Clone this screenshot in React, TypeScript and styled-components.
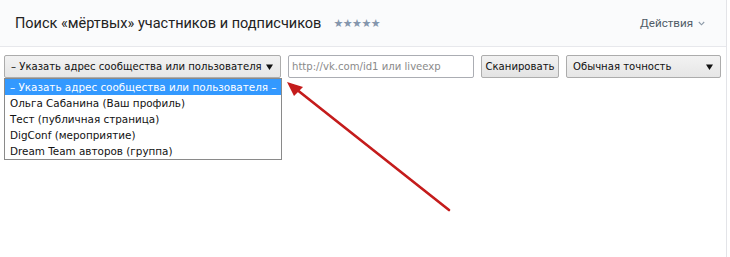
import React from "react";
import styled, { createGlobalStyle } from "styled-components";

const Global = createGlobalStyle`
  html, body { margin: 0; padding: 0; background: #fff; }
  body { width: 730px; height: 257px; overflow: hidden; position: relative; }
`;

const Page = styled.div`
  position: relative;
  width: 730px;
  height: 257px;
`;

const Card = styled.div`
  width: 726px;
  height: 257px;
  border-right: 1px solid #e3e4e8;
  background: #fff;
`;

const Header = styled.div`
  height: 47px;
  background: #fafbfc;
  border-bottom: 1px solid #e7e8ec;
  display: flex;
  align-items: center;
  padding: 0 21px 0 15px;
  box-sizing: border-box;
  font-family: Roboto, "Open Sans", sans-serif;
`;

const Title = styled.div`
  font-size: 14.5px;
  color: #222;
`;

const Stars = styled.div`
  margin-left: 12px;
  color: #8496ad;
  font-size: 11px;
  letter-spacing: -0.5px;
  font-family: "DejaVu Sans", sans-serif;
`;

const Actions = styled.div`
  margin-left: auto;
  font-size: 11.6px;
  color: #4f5b67;
  display: flex;
  align-items: center;
  gap: 5px;
`;

const Toolbar = styled.div`
  display: flex;
  align-items: flex-start;
  gap: 7px;
  padding: 8px 0 0 4px;
  font-family: "DejaVu Sans", Tahoma, sans-serif;
  font-size: 10.1px;
  & > * { flex-shrink: 0; }
`;

const SelectWrap = styled.div`
  position: relative;
`;

const SelectBox = styled.div<{ $w: number }>`
  width: ${(p) => p.$w}px;
  height: 23px;
  box-sizing: border-box;
  border: 1px solid #acacac;
  border-radius: 2px;
  background: linear-gradient(#f2f2f2, #e6e6e6);
  display: flex;
  align-items: center;
  padding: 0 7px 0 6px;
  color: #111;
  white-space: nowrap;
`;

const Caret = styled.svg`
  margin-left: auto;
  flex-shrink: 0;
`;

const ListBox = styled.div`
  position: absolute;
  top: 23px;
  left: 0;
  width: 278px;
  box-sizing: border-box;
  border: 1px solid #8a8a8a;
  background: #fff;
  font-size: 10.4px;
`;

const Option = styled.div<{ $active?: boolean }>`
  height: 16px;
  line-height: 16px;
  padding: 0 5px;
  white-space: nowrap;
  color: ${(p) => (p.$active ? "#fff" : "#111")};
  background: ${(p) => (p.$active ? "#3399ff" : "transparent")};
`;

const Input = styled.input`
  width: 186px;
  height: 23px;
  box-sizing: border-box;
  border: 1px solid #abadb3;
  border-radius: 2px;
  padding: 0 3px;
  font: inherit;
  color: #111;
  &::placeholder { color: #8a8a8a; }
`;

const Button = styled.button`
  width: 78px;
  height: 23px;
  box-sizing: border-box;
  border: 1px solid #adadad;
  border-radius: 2px;
  background: linear-gradient(#f2f2f2, #e3e3e3);
  font: inherit;
  color: #111;
  padding: 0;
`;

const ArrowSvg = styled.svg`
  position: absolute;
  left: 0;
  top: 0;
  pointer-events: none;
`;

const DownTri = () => (
  <Caret width="7" height="6" viewBox="0 0 7 6">
    <polygon points="0,0.5 7,0.5 3.5,6" fill="#111" />
  </Caret>
);

export default function App() {
  return (
    <Page>
      <Global />
      <Card>
        <Header>
          <Title>Поиск «мёртвых» участников и подписчиков</Title>
          <Stars>★★★★★</Stars>
          <Actions>
            Действия
            <svg width="7" height="5" viewBox="0 0 7 5">
              <path d="M0.8 1 L3.5 3.8 L6.2 1" fill="none" stroke="#8c9aa8" strokeWidth="1.1" />
            </svg>
          </Actions>
        </Header>
        <Toolbar>
          <SelectWrap>
            <SelectBox $w={277}>
              – Указать адрес сообщества или пользователя
              <DownTri />
            </SelectBox>
            <ListBox>
              <Option $active>– Указать адрес сообщества или пользователя –</Option>
              <Option>Ольга Сабанина (Ваш профиль)</Option>
              <Option>Тест (публичная страница)</Option>
              <Option>DigConf (мероприятие)</Option>
              <Option>Dream Team авторов (группа)</Option>
            </ListBox>
          </SelectWrap>
          <Input placeholder="http://vk.com/id1 или liveexp" />
          <Button>Сканировать</Button>
          <SelectBox $w={155}>
            Обычная точность
            <DownTri />
          </SelectBox>
        </Toolbar>
      </Card>
      <ArrowSvg width="730" height="257" viewBox="0 0 730 257">
        <defs>
          <filter id="glow" x="-10%" y="-10%" width="120%" height="120%">
            <feGaussianBlur stdDeviation="0.6" />
          </filter>
        </defs>
        <g filter="url(#glow)">
          <line x1="449" y1="210" x2="296" y2="89" stroke="#c41a1a" strokeWidth="2.6" strokeLinecap="round" />
          <polygon points="287,82 303,87 294,96" fill="#c41a1a" />
        </g>
      </ArrowSvg>
    </Page>
  );
}
